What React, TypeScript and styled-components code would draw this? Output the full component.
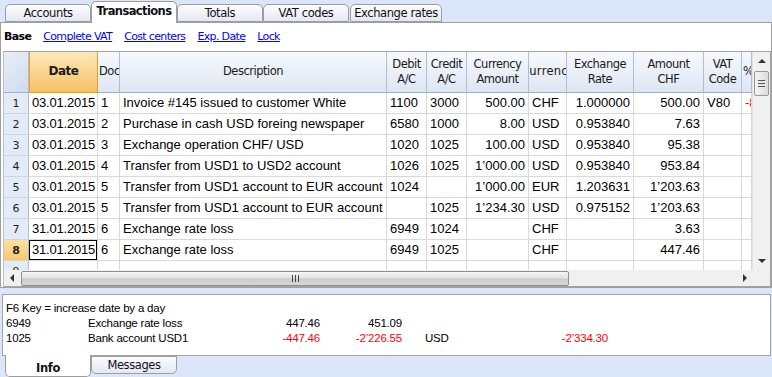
import React from 'react';
import styled, { createGlobalStyle, css } from 'styled-components';

// light blue window chrome behind the tabs
const GlobalStyle = createGlobalStyle`
  html, body { margin: 0; padding: 0; background: #dce6fa; }
  body { font-family: "Liberation Sans", Arial, sans-serif; }
`;

const UI_FONT = `"DejaVu Sans", Tahoma, sans-serif`;
const CELL_FONT = `"Liberation Sans", Arial, sans-serif`;

const COLS = [25, 69, 22, 267, 40, 40, 62, 38, 67, 70, 38, 10];

const Window = styled.div`
    width: 772px;
    height: 377px;
    overflow: hidden;
    background: #dce6fa;
    display: flex;
    flex-direction: column;
`;

const TabStrip = styled.div`
    height: 23px;
    margin-bottom: -1px;
    display: flex;
    align-items: flex-end;
    padding-left: 5px;
    position: relative;
    z-index: 1;
`;

const Tab = styled.div<{ $active?: boolean; $w: number; $gap?: number }>`
    width: ${p => p.$w}px;
    margin-left: ${p => p.$gap || 0}px;
    height: ${p => (p.$active ? 22 : 18)}px;
    margin-bottom: ${p => (p.$active ? 0 : 1)}px;
    box-sizing: border-box;
    border: 1px solid #9d9d9d;
    border-bottom: ${p => (p.$active ? 'none' : '1px solid #9d9d9d')};
    border-radius: 5px 5px 0 0;
    background: ${p => (p.$active ? '#fff' : 'linear-gradient(#fdfdfe, #e3e8f1)')};
    font-family: ${UI_FONT};
    font-size: 11.5px;
    font-weight: ${p => (p.$active ? 700 : 400)};
    letter-spacing: ${p => (p.$active ? -0.6 : -0.4)}px;
    color: #111;
    display: flex;
    align-items: center;
    justify-content: center;
    padding-bottom: ${p => (p.$active ? 3 : 0)}px;
`;

const MainPanel = styled.section`
    height: 266px;
    box-sizing: border-box;
    border: 1px solid #9f9f9f;
    background: #fff;
    padding-left: 2px;
    display: flex;
    flex-direction: column;
`;

const LinkBar = styled.div`
    height: 28px;
    display: flex;
    align-items: center;
    gap: 12px;
    padding-left: 1px;
    padding-bottom: 1px;
    box-sizing: border-box;
    font-family: ${UI_FONT};
    font-size: 11px;
    letter-spacing: -0.65px;
`;

const BaseLabel = styled.span`
    font-weight: 700;
    color: #000;
`;

const Link = styled.a`
    color: #0000ff;
    text-decoration: underline;
    cursor: pointer;
`;

const GridFrame = styled.div`
    width: 768px;
    height: 236px;
    box-sizing: border-box;
    border: 1px solid #a3a3a3;
    border-left-color: #b7c3d3;
    display: flex;
    flex-direction: column;
`;

const UpperArea = styled.div`
    height: 218px;
    display: flex;
`;

const Viewport = styled.div`
    width: 748px;
    height: 218px;
    overflow: hidden;
`;

const Sheet = styled.div`
    display: grid;
    grid-template-columns: ${COLS.map(c => `${c}px`).join(' ')};
    grid-auto-rows: auto;
`;

const HeadCell = styled.div<{ $hot?: boolean; $corner?: boolean; $start?: boolean }>`
    height: 41px;
    box-sizing: border-box;
    display: flex;
    align-items: center;
    justify-content: ${p => (p.$start ? 'flex-start' : 'center')};
    text-align: center;
    overflow: hidden;
    white-space: nowrap;
    font-family: ${UI_FONT};
    font-size: 11.5px;
    letter-spacing: -0.5px;
    line-height: 15px;
    color: #1a1a1a;
    border-right: 1px solid #a9bfdb;
    border-bottom: 1px solid #98b2d3;
    background: linear-gradient(#f7f9fd, #dde6f2);
    padding-bottom: 1px;
    ${p => p.$start && css`padding-left: 1px;`}
    ${p => p.$corner && css`
        background: linear-gradient(135deg, #e9eff8, #cfdbec);
    `}
    ${p => p.$hot && css`
        background: linear-gradient(#fde8ba, #f6c265);
        border: 1px solid #f29b1d;
        border-top: none;
        font-weight: 700;
        font-size: 12px;
    `}
`;

// header label; $over makes it wider than a narrow column so it is clipped on both sides
const HeadText = styled.span<{ $over?: number }>`
    flex-shrink: 0;
    ${p => p.$over && css`
        display: block;
        width: ${p.$over}px;
        margin-left: ${-(p.$over - 36) / 2}px;
        text-align: center;
        letter-spacing: 0.3px;
    `}
`;

const RowNum = styled.div<{ $selected?: boolean }>`
    height: 21px;
    box-sizing: border-box;
    border-right: 1px solid #a9bfdb;
    border-bottom: 1px solid #c9d6e8;
    background: ${p => (p.$selected ? 'linear-gradient(#fde2a4, #f8c86c)' : '#e3ebf6')};
    font-family: ${UI_FONT};
    font-size: 11px;
    font-weight: ${p => (p.$selected ? 700 : 400)};
    color: #222;
    display: flex;
    align-items: center;
    justify-content: center;
    padding-top: 1px;
`;

const Cell = styled.div<{ $right?: boolean; $red?: boolean; $focus?: boolean; $narrow?: boolean }>`
    height: 21px;
    box-sizing: border-box;
    border-right: 1px solid #d9d9d9;
    border-bottom: 1px solid #d9d9d9;
    padding: 0 3px 0 ${p => (p.$right ? 0 : 3)}px;
    font-family: ${CELL_FONT};
    font-size: 13px;
    line-height: 20px;
    white-space: nowrap;
    overflow: hidden;
    text-align: ${p => (p.$right ? 'right' : 'left')};
    color: ${p => (p.$red ? '#ff0000' : '#000')};
    ${p => p.$narrow && css`letter-spacing: -0.2px;`}
    ${p => p.$focus && css`box-shadow: inset 0 0 0 1px #000;`}
`;

const VScroll = styled.div`
    width: 18px;
    height: 218px;
    box-sizing: border-box;
    background: #f1f1f1;
    border-left: 1px solid #e2e2e2;
    display: flex;
    flex-direction: column;
    align-items: center;
`;

const ArrowBox = styled.div<{ $h?: number; $w?: number }>`
    width: ${p => p.$w || 17}px;
    height: ${p => p.$h || 18}px;
    display: flex;
    align-items: center;
    justify-content: center;
    flex-shrink: 0;
`;

const Arrow = styled.div<{ $dir: 'up' | 'down' | 'left' | 'right' }>`
    width: 0;
    height: 0;
    ${p => p.$dir === 'up' && css`
        border-left: 4px solid transparent;
        border-right: 4px solid transparent;
        border-bottom: 4px solid #333;
    `}
    ${p => p.$dir === 'down' && css`
        border-left: 4px solid transparent;
        border-right: 4px solid transparent;
        border-top: 4px solid #333;
    `}
    ${p => p.$dir === 'left' && css`
        border-top: 4px solid transparent;
        border-bottom: 4px solid transparent;
        border-right: 4px solid #333;
    `}
    ${p => p.$dir === 'right' && css`
        border-top: 4px solid transparent;
        border-bottom: 4px solid transparent;
        border-left: 4px solid #333;
    `}
`;

const VThumb = styled.div`
    width: 15px;
    height: 25px;
    margin-top: 1px;
    box-sizing: border-box;
    border: 1px solid #979797;
    border-radius: 2px;
    background: linear-gradient(90deg, #f4f4f4, #dcdcdc);
    display: flex;
    flex-direction: column;
    align-items: center;
    justify-content: center;
    gap: 2px;
`;

const GripH = styled.div`
    width: 7px;
    height: 1px;
    background: #555;
`;

const Spacer = styled.div`
    flex: 1;
`;

const LowerArea = styled.div`
    height: 16px;
    display: flex;
`;

const HScroll = styled.div`
    width: 748px;
    height: 16px;
    background: #f0f0f0;
    display: flex;
    align-items: center;
`;

const HThumb = styled.div`
    width: 548px;
    height: 15px;
    margin-left: 1px;
    box-sizing: border-box;
    border: 1px solid #8f8f8f;
    border-radius: 2px;
    background: linear-gradient(#f6f6f6, #e2e2e2 45%, #cbcbcb 55%, #d8d8d8);
    display: flex;
    align-items: center;
    justify-content: center;
    gap: 2px;
`;

const GripV = styled.div`
    width: 1px;
    height: 7px;
    background: #444;
`;

const Corner = styled.div`
    width: 18px;
    height: 16px;
    background: #f0f0f0;
`;

const InfoPanel = styled.div`
    margin: 6px 1px 0 2px;
    height: 62px;
    box-sizing: border-box;
    border: 1px solid #a3a3a3;
    background: #fff;
    padding: 6px 0 0 3px;
    font-family: ${CELL_FONT};
    font-size: 11.5px;
    letter-spacing: -0.2px;
    line-height: 15px;
    color: #000;
`;

const InfoLine = styled.div`
    display: grid;
    grid-template-columns: 82px 150px 82px 82px 23px 100px 83px;
    white-space: nowrap;
`;

const Amount = styled.span<{ $red?: boolean }>`
    text-align: right;
    color: ${p => (p.$red ? '#ff0000' : '#000')};
`;

const BottomTabs = styled.div`
    height: 21px;
    margin-top: -1px;
    display: flex;
    align-items: flex-start;
    padding-left: 5px;
    position: relative;
`;

const BottomTab = styled.div<{ $active?: boolean }>`
    width: 86px;
    height: ${p => (p.$active ? 22 : 18)}px;
    margin-top: ${p => (p.$active ? 0 : 1)}px;
    box-sizing: border-box;
    border: 1px solid #9d9d9d;
    border-top: ${p => (p.$active ? 'none' : '1px solid #9d9d9d')};
    border-radius: 0 0 5px 5px;
    background: ${p => (p.$active ? '#fff' : 'linear-gradient(#fbfcfe, #e3e8f1)')};
    font-family: ${UI_FONT};
    font-size: 11.5px;
    letter-spacing: -0.4px;
    font-weight: ${p => (p.$active ? 700 : 400)};
    color: #111;
    display: flex;
    align-items: center;
    justify-content: center;
    padding-top: ${p => (p.$active ? 4 : 0)}px;
`;

type Row = string[];

const rows: Row[] = [
    ['03.01.2015', '1', 'Invoice #145 issued to customer White', '1100', '3000', '500.00', 'CHF', '1.000000', '500.00', 'V80', '-8.00'],
    ['03.01.2015', '2', 'Purchase in cash USD foreing newspaper', '6580', '1000', '8.00', 'USD', '0.953840', '7.63', '', ''],
    ['03.01.2015', '3', 'Exchange operation CHF/ USD', '1020', '1025', '100.00', 'USD', '0.953840', '95.38', '', ''],
    ['03.01.2015', '4', 'Transfer from USD1 to USD2 account', '1026', '1025', '1\u2019000.00', 'USD', '0.953840', '953.84', '', ''],
    ['03.01.2015', '5', 'Transfer from USD1 account to EUR account', '1024', '', '1\u2019000.00', 'EUR', '1.203631', '1\u2019203.63', '', ''],
    ['03.01.2015', '5', 'Transfer from USD1 account to EUR account', '', '1025', '1\u2019234.30', 'USD', '0.975152', '1\u2019203.63', '', ''],
    ['31.01.2015', '6', 'Exchange rate loss', '6949', '1024', '', 'CHF', '', '3.63', '', ''],
    ['31.01.2015', '6', 'Exchange rate loss', '6949', '1025', '', 'CHF', '', '447.46', '', ''],
    ['', '', '', '', '', '', '', '', '', '', ''],
];

// columns holding numbers are right aligned
const RIGHT = [false, false, false, false, false, true, false, true, true, false, false];

const topTabs = ['Accounts', 'Transactions', 'Totals', 'VAT codes', 'Exchange rates'];

export default function App() {
    return (
        <>
            <GlobalStyle />
            <Window>
                <TabStrip>
                    {topTabs.map((t, i) => (
                        <Tab key={t} $active={i === 1} $w={i === 4 ? 92 : 86} $gap={i === 4 ? 1 : 0}>{t}</Tab>
                    ))}
                </TabStrip>
                <MainPanel>
                    <LinkBar>
                        <BaseLabel>Base</BaseLabel>
                        <Link>Complete VAT</Link>
                        <Link>Cost centers</Link>
                        <Link>Exp. Date</Link>
                        <Link>Lock</Link>
                    </LinkBar>
                    <GridFrame>
                        <UpperArea>
                            <Viewport>
                                <Sheet>
                                    <HeadCell $corner />
                                    <HeadCell $hot><HeadText>Date</HeadText></HeadCell>
                                    <HeadCell $start><HeadText>Doc</HeadText></HeadCell>
                                    <HeadCell><HeadText>Description</HeadText></HeadCell>
                                    <HeadCell><HeadText>Debit<br />A/C</HeadText></HeadCell>
                                    <HeadCell><HeadText>Credit<br />A/C</HeadText></HeadCell>
                                    <HeadCell><HeadText>Currency<br />Amount</HeadText></HeadCell>
                                    <HeadCell $start><HeadText $over={66}>Currency</HeadText></HeadCell>
                                    <HeadCell><HeadText>Exchange<br />Rate</HeadText></HeadCell>
                                    <HeadCell><HeadText>Amount<br />CHF</HeadText></HeadCell>
                                    <HeadCell><HeadText>VAT<br />Code</HeadText></HeadCell>
                                    <HeadCell $start><HeadText>%</HeadText></HeadCell>
                                    {rows.map((r, ri) => (
                                        <React.Fragment key={ri}>
                                            <RowNum $selected={ri === 7}>{ri + 1}</RowNum>
                                            {r.map((v, ci) => (
                                                <Cell
                                                    key={ci}
                                                    $right={RIGHT[ci]}
                                                    $red={ci === 10}
                                                    $narrow={ci === 0}
                                                    $focus={ri === 7 && ci === 0}
                                                >
                                                    {v}
                                                </Cell>
                                            ))}
                                        </React.Fragment>
                                    ))}
                                </Sheet>
                            </Viewport>
                            <VScroll>
                                <ArrowBox><Arrow $dir="up" /></ArrowBox>
                                <VThumb><GripH /><GripH /><GripH /></VThumb>
                                <Spacer />
                                <ArrowBox><Arrow $dir="down" /></ArrowBox>
                            </VScroll>
                        </UpperArea>
                        <LowerArea>
                            <HScroll>
                                <ArrowBox $h={16} $w={16}><Arrow $dir="left" /></ArrowBox>
                                <HThumb><GripV /><GripV /><GripV /></HThumb>
                                <Spacer />
                                <ArrowBox $h={16} $w={14}><Arrow $dir="right" /></ArrowBox>
                            </HScroll>
                            <Corner />
                        </LowerArea>
                    </GridFrame>
                </MainPanel>
                <InfoPanel>
                    <div>F6 Key = increase date by a day</div>
                    <InfoLine>
                        <span>6949</span>
                        <span>Exchange rate loss</span>
                        <Amount>447.46</Amount>
                        <Amount>451.09</Amount>
                        <span />
                        <span />
                        <span />
                    </InfoLine>
                    <InfoLine>
                        <span>1025</span>
                        <span>Bank account USD1</span>
                        <Amount $red>-447.46</Amount>
                        <Amount $red>-2’226.55</Amount>
                        <span />
                        <span>USD</span>
                        <Amount $red>-2’334.30</Amount>
                    </InfoLine>
                </InfoPanel>
                <BottomTabs>
                    <BottomTab $active>Info</BottomTab>
                    <BottomTab>Messages</BottomTab>
                </BottomTabs>
            </Window>
        </>
    );
}
